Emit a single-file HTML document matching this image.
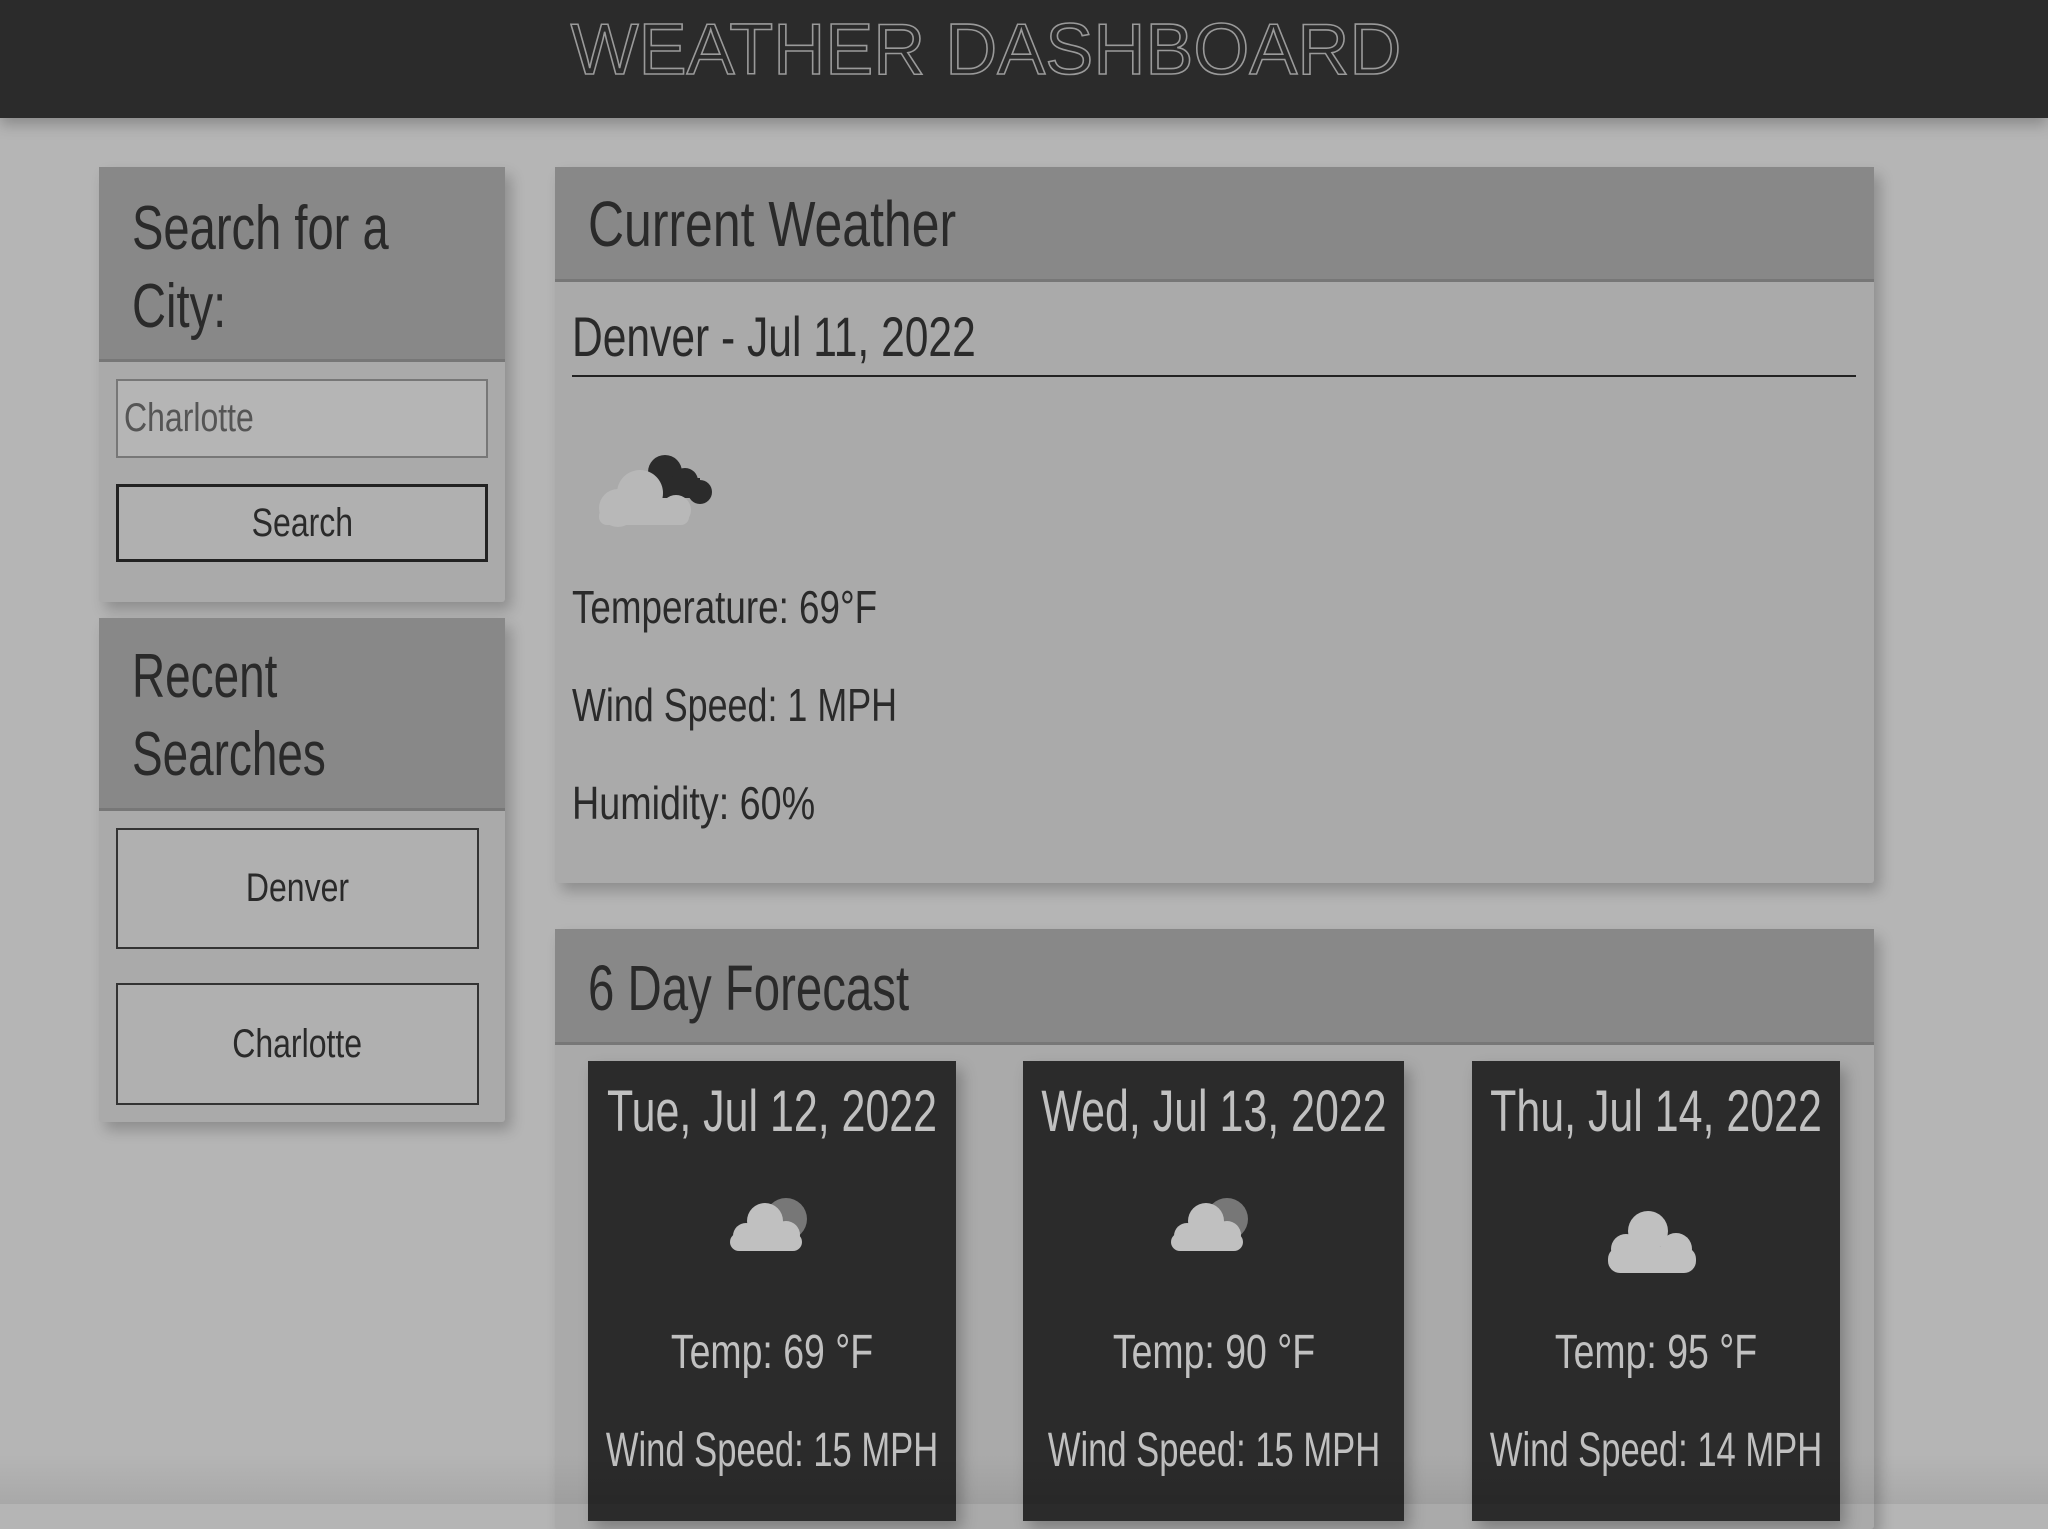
<!DOCTYPE html>
<html><head><meta charset="utf-8"><style>
*{margin:0;padding:0;box-sizing:border-box}
body{width:2048px;height:1504px;overflow:hidden;background:#b5b5b5;font-family:"Liberation Sans Narrow","Liberation Sans",sans-serif;position:relative;color:#2a2a2a}
.abs{position:absolute}
.hdr{left:0;top:0;width:2048px;height:118px;background:#2b2b2b;box-shadow:0 6px 14px rgba(0,0,0,.25)}
.title{left:0;width:2048px;top:12px;text-align:center;font-family:"Liberation Sans",sans-serif;font-size:72px;line-height:76px;color:transparent;-webkit-text-stroke:1.6px #9a9a9a;transform:translateX(-38px)}
.panel{background:#aaa;box-shadow:6px 8px 14px rgba(0,0,0,.22);border-radius:3px}
.ph{background:#888;border-bottom:3px solid #777}
.t{white-space:nowrap;line-height:1;display:block}
.box{display:flex;align-items:center;justify-content:center;font-size:40px;white-space:nowrap}
.card{background:#2b2b2b;color:#c0c0c0;box-shadow:6px 8px 14px rgba(0,0,0,.25)}
.card .t{position:absolute;left:-50%;width:200%;text-align:center}
</style></head><body>
<div class="abs hdr"></div>
<div class="abs title">WEATHER DASHBOARD</div>

<div class="abs panel" style="left:99px;top:167px;width:406px;height:435px"></div>
<div class="abs ph" style="left:99px;top:167px;width:406px;height:195px"></div>
<div class="abs t" style="left:132px;top:190px;font-size:62px;line-height:78px;transform:scaleX(.76);transform-origin:left">Search for a<br>City:</div>
<div class="abs box" style="left:116px;top:379px;width:372px;height:79px;background:#b5b5b5;border:2px solid #777;justify-content:flex-start;padding-left:6px;color:#555"><span style="transform:scaleX(.8);transform-origin:left;display:inline-block">Charlotte</span></div>
<div class="abs box" style="left:116px;top:484px;width:372px;height:78px;border:3px solid #222;background:#b0b0b0"><span style="transform:scaleX(.8);display:inline-block">Search</span></div>

<div class="abs panel" style="left:99px;top:618px;width:406px;height:504px"></div>
<div class="abs ph" style="left:99px;top:618px;width:406px;height:193px"></div>
<div class="abs t" style="left:132px;top:638px;font-size:62px;line-height:78px;transform:scaleX(.74);transform-origin:left">Recent<br>Searches</div>
<div class="abs box" style="left:116px;top:828px;width:363px;height:121px;border:2px solid #333;background:#b0b0b0"><span style="transform:scaleX(.8);display:inline-block">Denver</span></div>
<div class="abs box" style="left:116px;top:983px;width:363px;height:122px;border:2px solid #333;background:#b0b0b0"><span style="transform:scaleX(.8);display:inline-block">Charlotte</span></div>

<div class="abs panel" style="left:555px;top:167px;width:1319px;height:716px"></div>
<div class="abs ph" style="left:555px;top:167px;width:1319px;height:115px"></div>
<div class="abs t" style="left:588px;top:192px;font-size:64px;transform:scaleX(.78);transform-origin:left">Current Weather</div>
<div class="abs t" style="left:572px;top:309px;font-size:56px;transform:scaleX(.76);transform-origin:left">Denver - Jul 11, 2022</div>
<div class="abs" style="left:572px;top:375px;width:1284px;height:2px;background:#222"></div>
<svg class="abs" style="left:590px;top:448px" width="130" height="85" viewBox="0 0 130 85">
 <g fill="#2b2b2b"><circle cx="75" cy="24" r="17"/><circle cx="95" cy="33" r="13"/><circle cx="110" cy="44" r="12"/><rect x="62" y="30" width="48" height="20"/></g>
 <g fill="#b8b8b8"><circle cx="50" cy="45" r="23"/><circle cx="28" cy="60" r="19"/><circle cx="86" cy="62" r="15"/><rect x="28" y="50" width="60" height="27" rx="10"/><rect x="9" y="60" width="90" height="17" rx="8"/></g>
</svg>
<div class="abs t" style="left:572px;top:584px;font-size:46px;transform:scaleX(.8);transform-origin:left">Temperature: 69°F</div>
<div class="abs t" style="left:572px;top:682px;font-size:46px;transform:scaleX(.78);transform-origin:left">Wind Speed: 1 MPH</div>
<div class="abs t" style="left:572px;top:780px;font-size:46px;transform:scaleX(.82);transform-origin:left">Humidity: 60%</div>

<div class="abs panel" style="left:555px;top:929px;width:1319px;height:600px"></div>
<div class="abs ph" style="left:555px;top:929px;width:1319px;height:116px"></div>
<div class="abs t" style="left:588px;top:956px;font-size:64px;transform:scaleX(.74);transform-origin:left">6 Day Forecast</div>

<div class="abs card" style="left:588px;top:1061px;width:368px;height:460px">
 <div class="t" style="top:22px;font-size:58px;transform:scaleX(.74)">Tue, Jul 12, 2022</div>
 <svg class="abs" style="left:138px;top:130px" width="90" height="80" viewBox="0 0 90 80"><circle cx="60" cy="28" r="21" fill="#777"/><g fill="#c0c0c0"><circle cx="39" cy="30" r="18"/><circle cx="20" cy="45" r="13"/><circle cx="60" cy="44" r="14"/><rect x="4" y="42" width="72" height="18" rx="9"/></g></svg>
 <div class="t" style="top:268px;font-size:48px;transform:scaleX(.78)">Temp: 69 °F</div>
 <div class="t" style="top:366px;font-size:48px;transform:scaleX(.72)">Wind Speed: 15 MPH</div>
</div>
<div class="abs card" style="left:1023px;top:1061px;width:381px;height:460px">
 <div class="t" style="top:22px;font-size:58px;transform:scaleX(.74)">Wed, Jul 13, 2022</div>
 <svg class="abs" style="left:144px;top:130px" width="90" height="80" viewBox="0 0 90 80"><circle cx="60" cy="28" r="21" fill="#777"/><g fill="#c0c0c0"><circle cx="39" cy="30" r="18"/><circle cx="20" cy="45" r="13"/><circle cx="60" cy="44" r="14"/><rect x="4" y="42" width="72" height="18" rx="9"/></g></svg>
 <div class="t" style="top:268px;font-size:48px;transform:scaleX(.78)">Temp: 90 °F</div>
 <div class="t" style="top:366px;font-size:48px;transform:scaleX(.72)">Wind Speed: 15 MPH</div>
</div>
<div class="abs card" style="left:1472px;top:1061px;width:368px;height:460px">
 <div class="t" style="top:22px;font-size:58px;transform:scaleX(.74)">Thu, Jul 14, 2022</div>
 <svg class="abs" style="left:128px;top:140px" width="110" height="80" viewBox="0 0 110 80"><g fill="#c0c0c0"><circle cx="48" cy="30" r="20"/><circle cx="26" cy="48" r="15"/><circle cx="76" cy="48" r="16"/><rect x="8" y="46" width="88" height="26" rx="12"/></g></svg>
 <div class="t" style="top:268px;font-size:48px;transform:scaleX(.78)">Temp: 95 °F</div>
 <div class="t" style="top:366px;font-size:48px;transform:scaleX(.72)">Wind Speed: 14 MPH</div>
</div>
<div class="abs" style="left:0;top:1454px;width:2048px;height:50px;background:linear-gradient(rgba(0,0,0,0),rgba(0,0,0,.07))"></div>
</body></html>
